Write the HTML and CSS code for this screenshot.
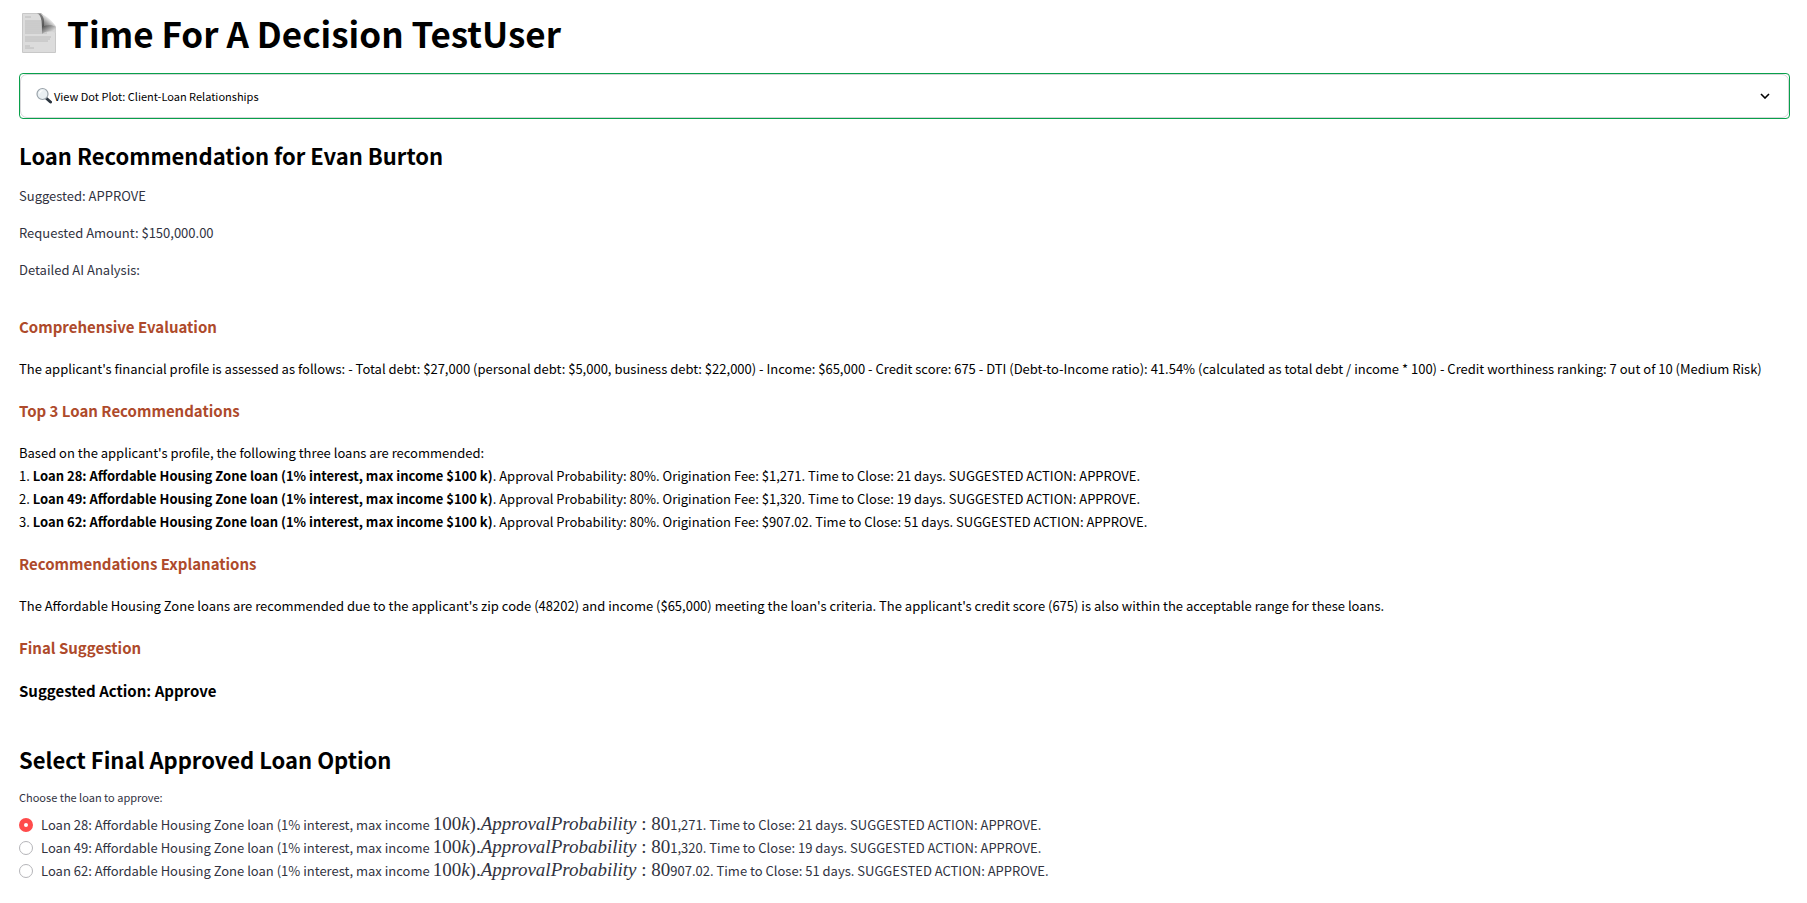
FILE: index.html
```html
<!DOCTYPE html>
<html lang="en">
<head>
<meta charset="utf-8">
<meta name="viewport" content="width=device-width, initial-scale=1">
<title>Time For A Decision</title>
<link rel="stylesheet" href="styles.css">
</head>
<body>
<main class="page">
  <h1 class="title">
    <svg class="title-icon" viewBox="0 0 34 40" aria-hidden="true">
      <defs>
        <linearGradient id="curl" x1="0" y1="1" x2="1" y2="0">
          <stop offset="0" stop-color="#5a5a5a"/><stop offset="0.35" stop-color="#a0a0a0"/><stop offset="0.6" stop-color="#f0f0f0"/><stop offset="1" stop-color="#d0d0d0"/>
        </linearGradient>
        <linearGradient id="fold" x1="0" y1="0" x2="0.6" y2="1">
          <stop offset="0" stop-color="#8a8a8a"/><stop offset="0.6" stop-color="#555"/><stop offset="1" stop-color="#d4d4d4"/>
        </linearGradient>
      </defs>
      <path d="M.5 .5H19L33.500 14V39.500H.5Z" fill="#dcdcdc" stroke="#c8c8c8"/>
      <path d="M3 4h6M3 8h16M3 10h17M3 12h17M3 14h17M3 16h18M3 18h19M3 20h22M3 24h26M3 26h25M3 28h23M3 33h5M3 35h9" stroke="#b2b2b2" stroke-width=".8" fill="none"/>
      <path d="M15 .5C20 2 20 10 20 21C24 18 29 18 33.500 20V13L19 .5Z" fill="url(#fold)"/>
      <path d="M18 .5C22 3 22.500 8 22 13C26 12 31 12 34 14C31 8 25 3 18 .5Z" fill="url(#curl)"/>
    </svg>
    Time For A Decision TestUser
  </h1>

  <details class="expander">
    <summary class="expander-head">
      <svg class="lens" viewBox="0 0 16 18" aria-hidden="true">
        <path d="M10 11L14.500 15" stroke="#2c3640" stroke-width="3" stroke-linecap="round"/>
        <circle cx="6.500" cy="7" r="5.500" fill="#eaf0f3" stroke="#9aa3aa" stroke-width="1.200"/>
        <path d="M3.500 6.500a3.500 3.500 0 0 1 3-3" fill="none" stroke="#fff" stroke-width="1.200"/>
      </svg>
      <span class="expander-label">View Dot Plot: Client-Loan Relationships</span>
      <svg class="chevron" viewBox="0 0 10 6" aria-hidden="true"><path d="M1 1L5 5L9 1" fill="none" stroke="#000" stroke-width="1.600"/></svg>
    </summary>
  </details>

  <section class="summary">
    <h2 class="heading">Loan Recommendation for Evan Burton</h2>
    <p>Suggested: APPROVE</p>
    <p>Requested Amount: $150,000.00</p>
    <p>Detailed AI Analysis:</p>
  </section>

  <section class="analysis">
    <h3>Comprehensive Evaluation</h3>
    <p>The applicant's financial profile is assessed as follows: - Total debt: $27,000 (personal debt: $5,000, business debt: $22,000) - Income: $65,000 - Credit score: 675 - DTI (Debt-to-Income ratio): 41.54% (calculated as total debt / income * 100) - Credit worthiness ranking: 7 out of 10 (Medium Risk)</p>
    <h3>Top 3 Loan Recommendations</h3>
    <p>Based on the applicant's profile, the following three loans are recommended:<br>
      1. <strong>Loan 28: Affordable Housing Zone loan (1% interest, max income $100 k)</strong>. Approval Probability: 80%. Origination Fee: $1,271. Time to Close: 21 days. SUGGESTED ACTION: APPROVE.<br>
      2. <strong>Loan 49: Affordable Housing Zone loan (1% interest, max income $100 k)</strong>. Approval Probability: 80%. Origination Fee: $1,320. Time to Close: 19 days. SUGGESTED ACTION: APPROVE.<br>
      3. <strong>Loan 62: Affordable Housing Zone loan (1% interest, max income $100 k)</strong>. Approval Probability: 80%. Origination Fee: $907.02. Time to Close: 51 days. SUGGESTED ACTION: APPROVE.</p>
    <h3>Recommendations Explanations</h3>
    <p>The Affordable Housing Zone loans are recommended due to the applicant's zip code (48202) and income ($65,000) meeting the loan's criteria. The applicant's credit score (675) is also within the acceptable range for these loans.</p>
    <h3>Final Suggestion</h3>
    <p class="verdict">Suggested Action: Approve</p>
  </section>

  <section class="decision">
    <h2 class="heading">Select Final Approved Loan Option</h2>
    <fieldset class="options">
      <legend>Choose the loan to approve:</legend>
      <label class="option"><input type="radio" name="loan" checked><span>Loan 28: Affordable Housing Zone loan (1% interest, max income <span class="math">100<i>k</i>).<i>ApprovalProbability</i> : 80</span>1,271. Time to Close: 21 days. SUGGESTED ACTION: APPROVE.</span></label>
      <label class="option"><input type="radio" name="loan"><span>Loan 49: Affordable Housing Zone loan (1% interest, max income <span class="math">100<i>k</i>).<i>ApprovalProbability</i> : 80</span>1,320. Time to Close: 19 days. SUGGESTED ACTION: APPROVE.</span></label>
      <label class="option"><input type="radio" name="loan"><span>Loan 62: Affordable Housing Zone loan (1% interest, max income <span class="math">100<i>k</i>).<i>ApprovalProbability</i> : 80</span>907.02. Time to Close: 51 days. SUGGESTED ACTION: APPROVE.</span></label>
    </fieldset>
  </section>
</main>
</body>
</html>
```
FILE: styles.css
```css
* { box-sizing: border-box; }
body {
  margin: 0;
  background: #fff;
  color: #31333f;
  font: 13px/23px "Noto Sans CJK SC", "Noto Sans", sans-serif;
}
h1, h2, h3, p { margin: 0; }
.page { padding: 9px 17px 18px 19px; }
.title {
  display: flex;
  align-items: center;
  gap: 11px;
  padding-left: 3px;
  margin-bottom: 16px;
  color: #000;
  font-size: 35px;
  line-height: 48px;
  font-weight: 700;
}
.title-icon { width: 34px; height: 40px; flex: none; }
.expander {
  border: 1px solid #09a04b;
  border-radius: 4px;
}
.expander-head {
  display: flex;
  align-items: center;
  gap: 2px;
  padding: 0 18px 0 15px;
  border: 1px solid #d6d6d9;
  border-radius: 7px;
  line-height: 42px;
  font-size: 11px;
  color: #000;
  cursor: pointer;
  list-style: none;
}
.expander-head::-webkit-details-marker { display: none; }
.lens { width: 16px; height: 18px; flex: none; }
.chevron { width: 10px; height: 6px; margin-left: auto; }
.heading {
  color: #000;
  font-size: 22px;
  line-height: 30px;
  font-weight: 700;
}
.summary {
  display: grid;
  gap: 14px;
  margin: 21px 0 35px;
}
.analysis { color: #000; }
.analysis h3, .verdict { font-size: 15px; line-height: 22px; font-weight: 700; }
.analysis h3 { color: #ae4a2b; margin-bottom: 19px; }
.analysis p { margin-bottom: 20px; }
.analysis .verdict { margin-top: 21px; margin-bottom: 42px; }
.options {
  margin: 13px 0 0;
  padding: 0;
  border: 0;
}
.options legend { padding: 0; margin-bottom: 6px; font-size: 11px; line-height: 20px; }
.option { display: flex; align-items: center; gap: 8px; height: 23px; }
.option input {
  appearance: none;
  flex: none;
  width: 14px;
  height: 14px;
  margin: 0;
  border: 1px solid #b5b5b9;
  border-radius: 50%;
  background: #fff;
}
.option input:checked { border: 5px solid #ff4b4b; }
.math { font-family: "Liberation Serif", serif; font-size: 19px; line-height: 20px; }
```
